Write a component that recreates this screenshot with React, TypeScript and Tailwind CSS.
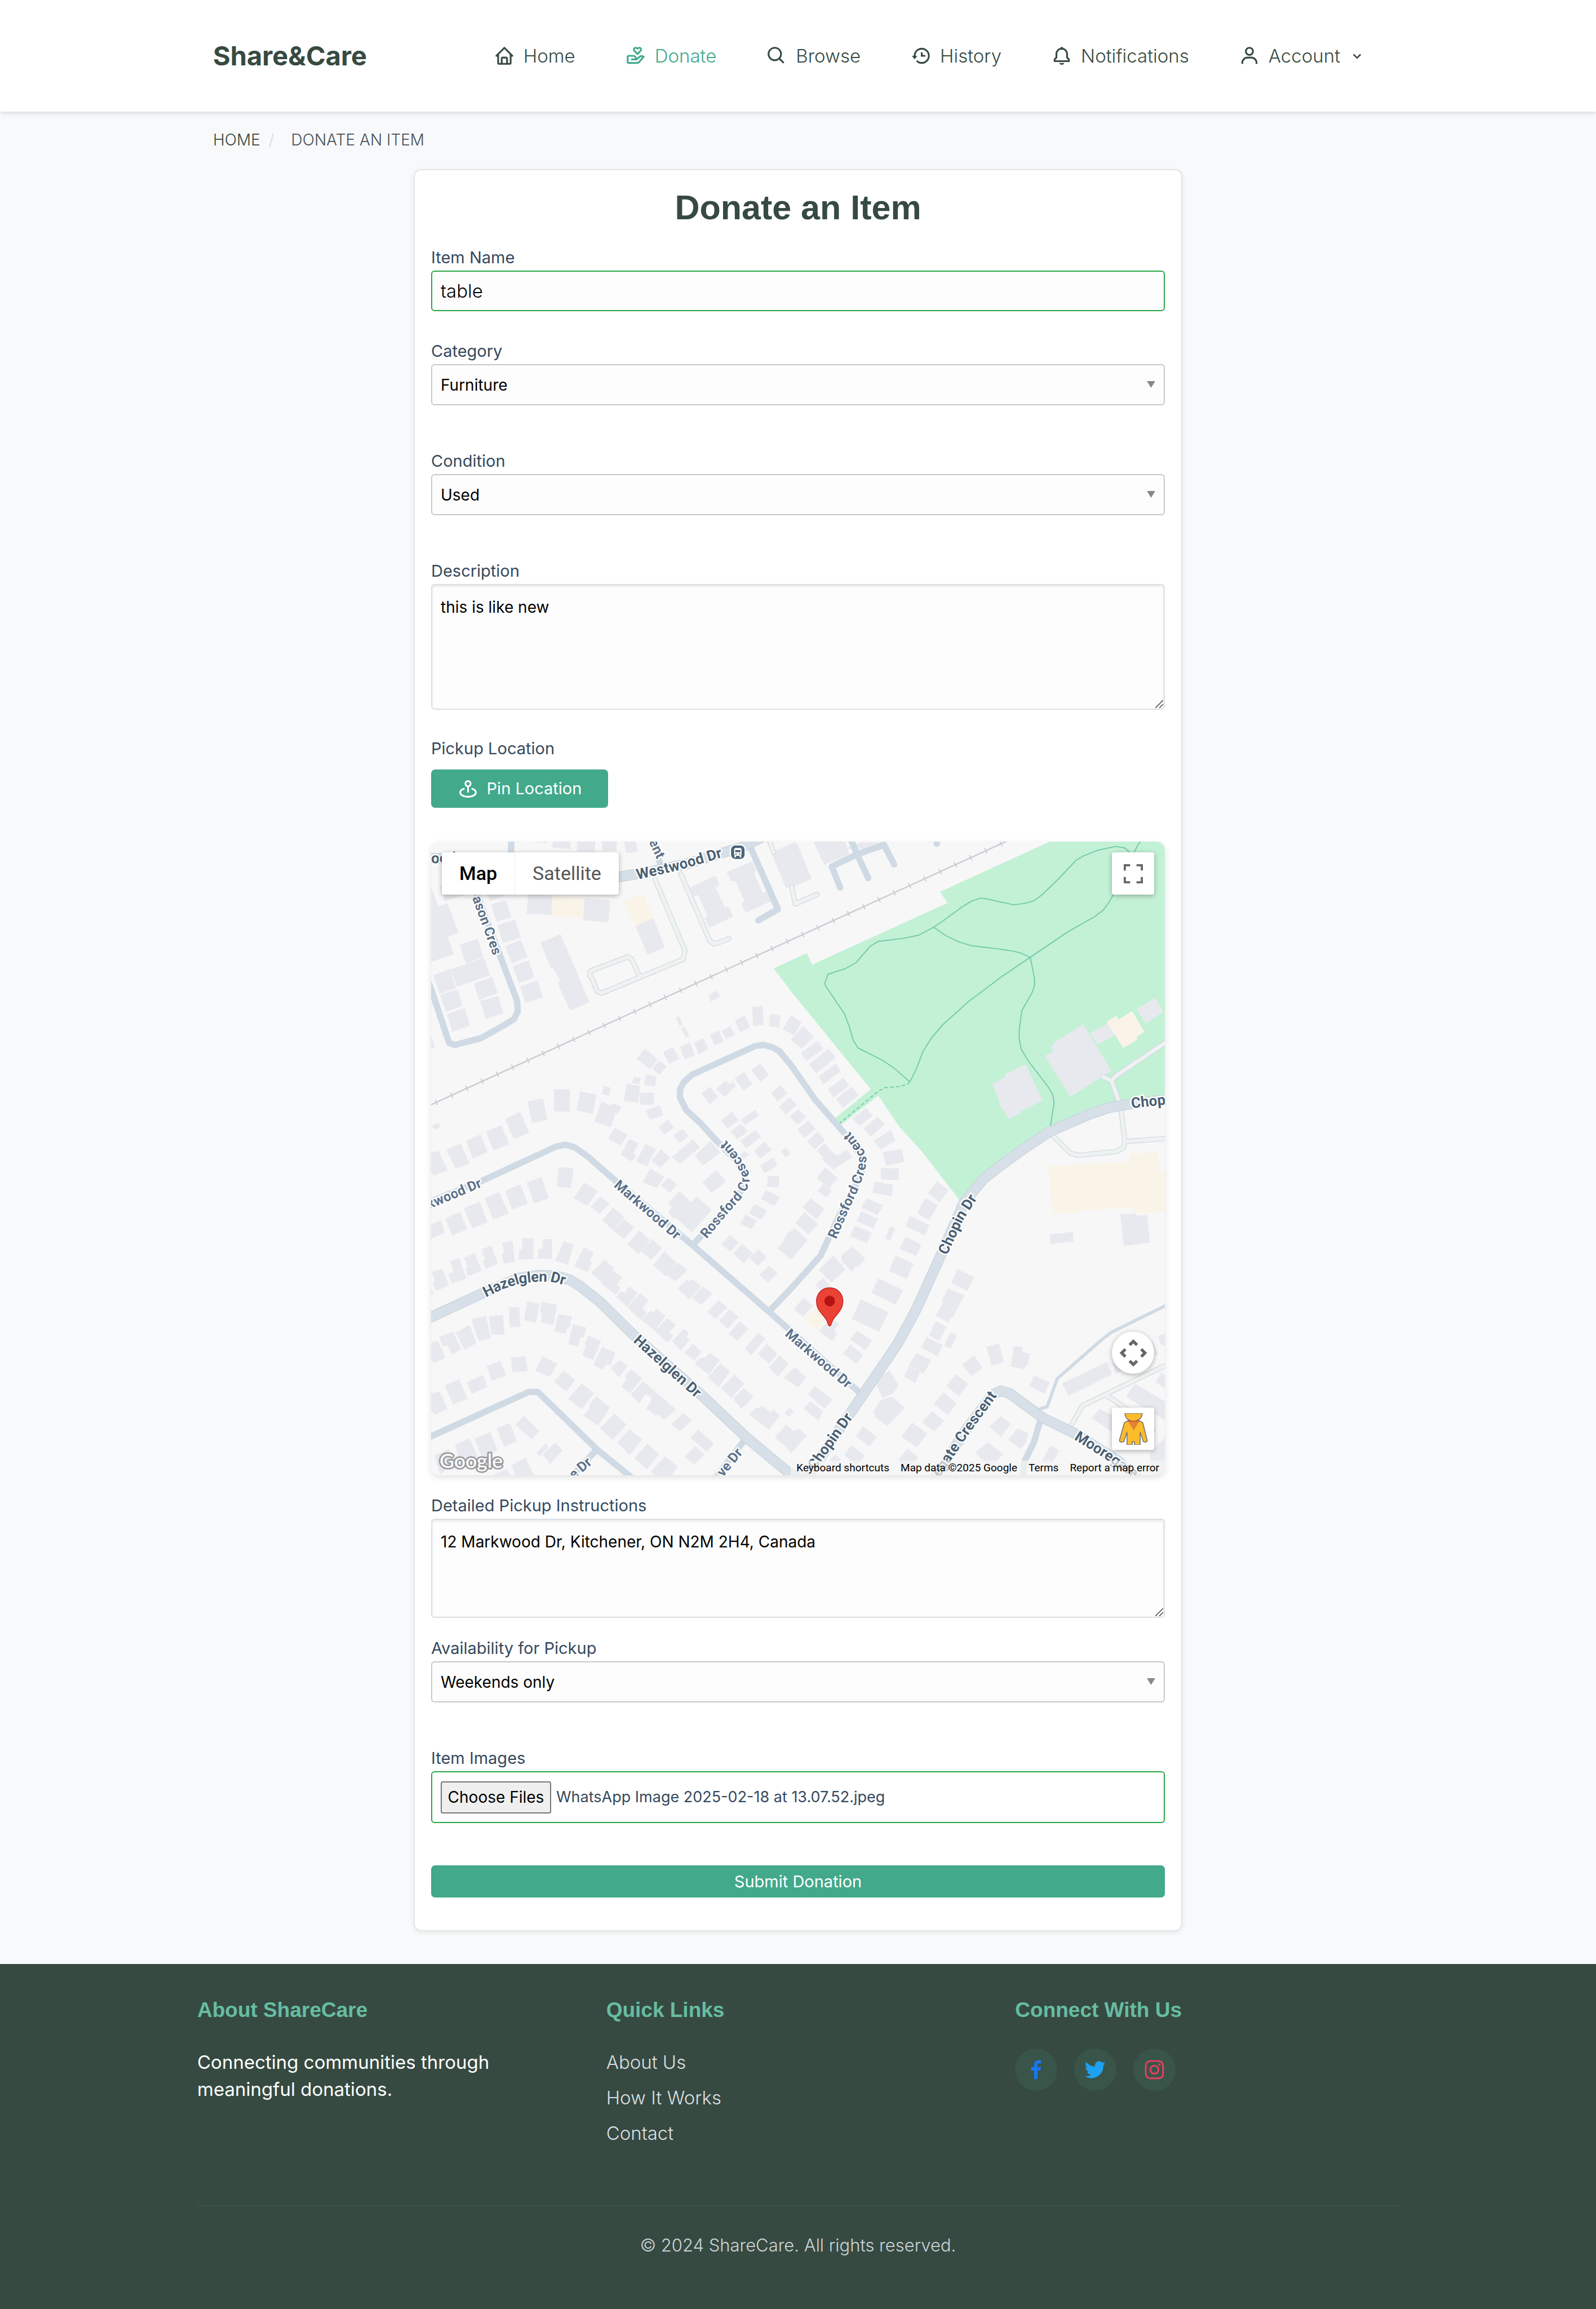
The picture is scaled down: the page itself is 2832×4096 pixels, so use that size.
import type { ComponentType, ReactNode } from 'react';
import {
  BiBell,
  BiChevronDown,
  BiDonateHeart,
  BiHistory,
  BiHome,
  BiLogoFacebook,
  BiLogoInstagram,
  BiLogoTwitter,
  BiMapPin,
  BiSearch,
  BiUser,
} from 'react-icons/bi';

type IconType = ComponentType<{ className?: string }>;

/* ---------- map geometry ---------- */

type TileName = 'nw' | 'ne' | 'sw' | 'se';

const tiles: Record<TileName, { x: number; y: number; sx: number; sy: number }> = {
  nw: { x: -17, y: -14, sx: 0.4591, sy: 0.3954 },
  ne: { x: 683, y: -14, sx: 0.4591, sy: 0.3954 },
  sw: { x: -17, y: 586, sx: 0.4591, sy: 0.4082 },
  se: { x: 683, y: 586, sx: 0.4591, sy: 0.4082 },
};

type Segment = [TileName, number[]];

function project([name, c]: Segment): string[] {
  const t = tiles[name];
  const out: string[] = [];
  for (let i = 0; i < c.length; i += 2) {
    out.push(`${Math.round(t.x + c[i] * t.sx)} ${Math.round(t.y + c[i + 1] * t.sy)}`);
  }
  return out;
}

function trace(...segments: Segment[]) {
  return 'M' + segments.flatMap(project).join('L');
}

function lots(name: TileName, shapes: number[][]) {
  return shapes
    .map((s) => {
      const full = s.length === 6 ? [...s, s[0] + s[4] - s[2], s[1] + s[5] - s[3]] : s;
      return trace([name, full]) + 'Z';
    })
    .join('');
}

const buildingsNW = lots('nw', [
  [37, 250, 65, 345, 105, 332, 150, 470, 105, 492, 130, 575, 37, 612],
  [75, 250, 92, 322, 175, 290],
  [155, 532, 228, 500, 253, 588],
  [118, 648, 255, 592, 280, 676],
  [46, 675, 115, 646, 140, 735],
  [75, 770, 145, 743, 168, 822],
  [102, 862, 175, 832, 198, 915],
  [213, 715, 290, 683, 312, 762],
  [240, 800, 314, 773, 336, 858],
  [268, 290, 280, 318, 342, 294],
  [285, 336, 347, 315, 369, 398],
  [309, 436, 383, 409, 407, 495],
  [343, 535, 408, 506, 435, 588],
  [374, 632, 440, 605, 465, 686],
  [402, 728, 474, 700, 498, 782],
  [437, 285, 538, 293, 533, 387],
  [670, 307, 775, 317, 769, 423],
  [880, 440, 953, 403, 1002, 540, 930, 577],
  [487, 520, 571, 477, 691, 803, 609, 845, 557, 710, 570, 702, 540, 640, 532, 643],
  [1105, 255, 1212, 198, 1228, 243, 1210, 255, 1250, 352, 1265, 347, 1284, 395, 1185, 447, 1165, 400, 1178, 393, 1138, 292, 1120, 298],
  [1257, 183, 1362, 128, 1380, 175, 1367, 182, 1405, 280, 1420, 272, 1440, 320, 1335, 377, 1315, 328, 1330, 322, 1292, 222, 1275, 226],
  [1440, 85, 1540, 38, 1568, 110, 1568, 235, 1500, 258],
  [455, 35, 512, 42, 512, 35],
  [540, 35, 613, 35, 611, 72, 536, 62],
  [640, 35, 715, 35, 712, 85, 638, 82],
  [743, 35, 803, 35, 802, 78, 742, 78],
  [831, 35, 882, 35, 889, 83, 842, 92],
  [1180, 772, 1217, 749, 1228, 778],
  [1045, 880, 1059, 870, 1077, 910],
  [1068, 930, 1082, 921, 1103, 965],
  [885, 1075, 920, 1028, 972, 1080, 940, 1125],
  [950, 1122, 977, 1083, 1008, 1113],
  [993, 1045, 1035, 1020, 1061, 1075],
  [1062, 1020, 1104, 997, 1126, 1056],
  [1121, 1000, 1160, 975, 1180, 1030],
  [1187, 958, 1225, 938, 1244, 992],
  [1236, 940, 1272, 920, 1290, 962],
  [1289, 892, 1330, 868, 1353, 925],
  [1361, 828, 1404, 823, 1409, 914],
  [1436, 862, 1478, 868, 1472, 925],
  [1488, 932, 1523, 868, 1566, 900, 1535, 963],
  [864, 1190, 874, 1160, 903, 1168],
  [923, 1150, 968, 1160, 960, 1209],
  [843, 1194, 900, 1206, 890, 1288],
  [897, 1238, 956, 1236, 957, 1294],
  [924, 1322, 980, 1298, 995, 1345],
  [975, 1400, 1015, 1366, 1040, 1405],
  [1036, 1444, 1073, 1410, 1101, 1445],
  [750, 1205, 777, 1213, 770, 1252],
  [544, 1221, 610, 1221, 610, 1328],
  [652, 1232, 719, 1248, 703, 1338],
  [740, 1283, 775, 1297, 790, 1290, 821, 1305, 808, 1340, 798, 1335, 778, 1404, 711, 1375],
  [435, 1280, 499, 1264, 517, 1368],
  [341, 1362, 405, 1330, 442, 1430],
  [263, 1424, 327, 1394, 359, 1484],
  [180, 1470, 240, 1440, 270, 1522],
  [98, 1510, 160, 1481, 196, 1578, 140, 1602],
  [37, 1525, 68, 1515, 105, 1608, 50, 1636, 37, 1620],
  [42, 1397, 68, 1382, 76, 1402],
  [37, 965, 54, 1020, 37, 1028],
  [768, 1458, 796, 1406, 848, 1440],
  [853, 1460, 892, 1480, 872, 1530, 884, 1536, 868, 1568, 820, 1535],
  [883, 1568, 922, 1484, 965, 1508, 928, 1590],
  [985, 1510, 1023, 1548, 985, 1598, 945, 1562],
  [1030, 1545, 1118, 1462, 1145, 1500, 1062, 1580],
  [1125, 1540, 1190, 1470, 1230, 1525, 1158, 1586],
  [1152, 1243, 1187, 1209, 1223, 1258],
  [1214, 1222, 1250, 1180, 1270, 1198, 1280, 1185, 1297, 1205, 1248, 1260],
  [1290, 1172, 1328, 1139, 1364, 1197],
  [1358, 1130, 1394, 1098, 1432, 1153],
  [1439, 1240, 1480, 1202, 1507, 1242],
  [1472, 1305, 1518, 1260, 1547, 1298],
  [1517, 1350, 1553, 1314, 1580, 1352],
  [1232, 1370, 1278, 1329, 1304, 1370],
  [1315, 1365, 1374, 1319, 1389, 1347],
  [1271, 1422, 1316, 1385, 1345, 1425],
  [1312, 1470, 1374, 1416, 1399, 1450],
  [1367, 1515, 1414, 1473, 1442, 1512],
  [1480, 1520, 1500, 1503, 1520, 1530],
]);

const buildingsNE = lots('ne', [
  [0, 45, 20, 38, 82, 213, 10, 250, -60, 90],
  [90, 35, 220, 35, 237, 95, 135, 147],
  [285, 38, 365, 38, 300, 72],
  [827, 1195, 883, 1160, 880, 1150, 966, 1103, 1034, 1275, 942, 1330, 943, 1337, 895, 1363, 875, 1320, 870, 1322, 855, 1288, 858, 1280],
  [1046, 1062, 1080, 1038, 1070, 1015, 1083, 1010, 1082, 998, 1203, 910, 1321, 1133, 1150, 1256],
  [1233, 953, 1305, 905, 1335, 960, 1262, 1010],
  [1423, 838, 1500, 784, 1534, 850, 1461, 907],
  [-5, 985, 47, 918, 91, 972, 42, 1030],
  [37, 1048, 108, 988, 131, 1027],
  [72, 1103, 153, 1028, 182, 1070],
  [110, 1162, 182, 1098, 203, 1136],
  [148, 1222, 213, 1166, 237, 1205],
  [183, 1268, 248, 1210, 277, 1252],
  [251, 1360, 307, 1309, 334, 1348],
  [297, 1412, 354, 1354, 383, 1392],
  [338, 1466, 409, 1420, 430, 1468, 366, 1510],
  [377, 1523, 455, 1507, 465, 1570, 388, 1588],
  [0, 1345, 25, 1320, 58, 1350, 28, 1388],
  [23, 1415, 70, 1371, 99, 1410],
  [64, 1470, 108, 1424, 138, 1465],
  [102, 1515, 134, 1480, 160, 1512],
  [125, 1555, 160, 1515, 190, 1540, 225, 1510, 250, 1545, 172, 1606],
]);

const buildingsSW = lots('sw', [
  [555, 165, 565, 73, 625, 80],
  [625, 218, 668, 147, 725, 185],
  [695, 258, 737, 211, 773, 244],
  [743, 322, 789, 262, 835, 307],
  [788, 370, 832, 315, 875, 352],
  [847, 432, 897, 367, 942, 413],
  [903, 465, 949, 410, 992, 450],
  [953, 530, 998, 466, 1050, 517],
  [1007, 570, 1057, 516, 1095, 550],
  [1055, 640, 1092, 598, 1103, 604, 1118, 595, 1150, 627, 1105, 688],
  [1112, 680, 1158, 626, 1197, 662],
  [1176, 746, 1225, 691, 1258, 724],
  [1225, 790, 1268, 735, 1304, 770],
  [1266, 848, 1312, 790, 1347, 825],
  [1330, 918, 1385, 843, 1415, 870],
  [1386, 940, 1422, 893, 1466, 940],
  [1432, 1005, 1475, 947, 1512, 988],
  [1500, 1050, 1540, 1002, 1584, 1050, 1552, 1095],
  [910, 145, 940, 80, 1000, 120, 970, 172],
  [985, 160, 1015, 122, 1052, 155],
  [1015, 240, 1062, 186, 1108, 237, 1135, 212, 1195, 275, 1112, 377, 1048, 312, 1035, 310, 1015, 285, 1030, 260],
  [1156, 142, 1215, 88, 1253, 143],
  [1298, 30, 1330, 0, 1350, 18, 1315, 50],
  [1396, 65, 1450, 30, 1467, 68],
  [1426, 115, 1474, 118, 1470, 170, 1422, 165],
  [1419, 181, 1476, 213, 1455, 255],
  [1370, 245, 1422, 275, 1400, 318],
  [1333, 295, 1380, 320, 1360, 363],
  [1234, 430, 1270, 386, 1307, 423],
  [1282, 475, 1320, 430, 1365, 475],
  [1350, 495, 1388, 456, 1422, 495],
  [1391, 576, 1430, 532, 1467, 567],
  [1467, 450, 1492, 423, 1508, 430, 1500, 405, 1535, 358, 1590, 415, 1522, 504],
  [431, 148, 492, 120, 523, 217],
  [343, 183, 406, 154, 436, 242],
  [256, 218, 319, 190, 357, 290],
  [173, 264, 237, 236, 271, 330],
  [95, 313, 157, 282, 186, 362],
  [37, 340, 77, 321, 94, 378, 37, 406],
  [40, 562, 82, 543, 110, 622, 58, 650, 42, 612, 55, 603],
  [37, 640, 47, 665, 37, 670],
  [115, 512, 152, 498, 184, 590, 125, 616, 106, 570, 130, 560],
  [172, 495, 217, 475, 247, 555, 190, 581, 179, 545, 190, 542],
  [246, 455, 286, 438, 314, 521, 263, 547, 249, 512, 259, 505],
  [331, 424, 372, 416, 384, 514, 335, 522, 328, 475, 338, 472],
  [412, 403, 460, 403, 460, 501, 399, 501, 400, 456, 413, 456],
  [497, 408, 536, 409, 535, 499, 478, 499, 479, 453, 496, 453],
  [583, 420, 625, 434, 602, 526, 549, 510],
  [668, 445, 708, 470, 693, 510, 701, 516, 681, 562, 628, 535],
  [698, 566, 753, 502, 790, 545, 740, 608],
  [738, 613, 783, 552, 825, 585, 802, 622, 820, 635, 800, 668],
  [802, 675, 822, 650, 837, 660, 853, 626, 890, 660, 845, 723],
  [847, 725, 900, 660, 934, 693, 908, 730, 927, 750, 902, 784],
  [905, 785, 940, 742, 957, 747, 968, 730, 1005, 765, 960, 832],
  [960, 835, 1010, 773, 1047, 805, 1020, 840, 1037, 855, 1013, 889],
  [1031, 882, 1080, 825, 1100, 842, 1092, 862, 1104, 872, 1067, 925],
  [1082, 937, 1117, 893, 1153, 930, 1125, 973],
  [1124, 985, 1143, 962, 1167, 958, 1190, 936, 1228, 970, 1182, 1038],
  [1178, 1050, 1230, 985, 1270, 1024, 1225, 1095],
  [1233, 1100, 1290, 1036, 1328, 1080, 1277, 1147],
  [1283, 1150, 1327, 1099, 1367, 1138, 1318, 1195],
  [1348, 1222, 1378, 1187, 1390, 1192, 1402, 1182, 1440, 1212, 1450, 1198, 1477, 1228, 1430, 1293],
  [1495, 1215, 1518, 1191, 1535, 1208],
  [1455, 1327, 1502, 1269, 1535, 1303],
  [1490, 1357, 1545, 1290, 1580, 1328, 1522, 1404],
  [37, 890, 65, 880, 96, 958, 47, 984, 37, 965],
  [69, 862, 128, 837, 162, 918, 125, 943, 103, 898, 85, 908],
  [137, 842, 195, 806, 225, 892, 175, 920],
  [202, 780, 263, 764, 283, 866, 232, 881],
  [276, 767, 333, 760, 340, 852, 285, 853],
  [358, 725, 401, 723, 405, 817],
  [433, 697, 483, 708, 470, 795],
  [490, 701, 557, 713, 542, 806, 490, 795, 495, 752, 485, 748],
  [563, 756, 618, 767, 610, 818, 598, 815, 592, 848, 545, 838],
  [620, 804, 677, 818, 668, 865, 654, 862, 645, 907, 603, 897],
  [684, 856, 739, 882, 706, 969, 661, 948, 675, 905, 668, 900],
  [742, 908, 798, 937, 777, 995, 757, 990, 746, 1015, 705, 992],
  [778, 1008, 815, 968, 848, 998, 812, 1050],
  [823, 1092, 843, 1058, 836, 1043, 863, 1012, 908, 1055, 855, 1125],
  [861, 1130, 910, 1068, 960, 1112, 943, 1138, 922, 1128, 895, 1170],
  [923, 1192, 945, 1158, 943, 1140, 960, 1116, 1012, 1160, 965, 1230],
  [965, 1215, 1010, 1167, 1048, 1198],
  [1028, 1266, 1078, 1216, 1113, 1250],
  [1107, 1330, 1140, 1290, 1204, 1358, 1175, 1396],
  [1083, 1417, 1128, 1370, 1166, 1409],
  [265, 998, 323, 973, 346, 1040],
  [366, 958, 428, 953, 435, 1021],
  [184, 1072, 250, 1038, 271, 1092],
  [93, 1087, 152, 1058, 187, 1148],
  [37, 1125, 72, 1115, 104, 1195, 50, 1224, 37, 1200],
  [467, 1020, 496, 951, 557, 987, 528, 1048],
  [544, 1070, 583, 1019, 632, 1060, 594, 1118],
  [604, 1150, 657, 1077, 710, 1125, 658, 1198],
  [664, 1228, 692, 1190, 688, 1178, 718, 1136, 776, 1190, 725, 1274],
  [735, 1286, 793, 1218, 843, 1268, 787, 1340],
  [804, 1352, 857, 1292, 909, 1338, 855, 1412],
  [875, 1425, 930, 1357, 979, 1407, 928, 1477],
  [943, 1488, 1003, 1417, 1055, 1465, 1028, 1504, 960, 1504],
  [384, 1268, 421, 1227, 483, 1298, 450, 1338],
  [307, 1287, 361, 1262, 392, 1345, 338, 1372],
  [216, 1335, 280, 1304, 311, 1390, 250, 1430],
  [134, 1362, 195, 1332, 230, 1420, 160, 1450],
  [50, 1410, 110, 1382, 130, 1450, 75, 1500],
  [368, 1458, 428, 1422, 460, 1504, 385, 1504],
  [470, 1402, 507, 1356, 522, 1370],
  [497, 1408, 548, 1353, 580, 1390, 529, 1450],
  [290, 1504, 350, 1475, 362, 1504],
]);

const buildingsSE = lots('se', [
  [103, 125, 137, 75, 190, 125],
  [107, 183, 130, 152, 165, 185],
  [46, 263, 78, 217, 134, 270],
  [15, 332, 55, 284, 109, 338],
  [-20, 385, 12, 358, 66, 412, 0, 500, -50, 450],
  [369, 79, 443, 80, 443, 134],
  [342, 141, 420, 156, 412, 208],
  [309, 219, 377, 252, 355, 297],
  [287, 280, 355, 314, 337, 360],
  [262, 345, 330, 379, 310, 429],
  [405, 350, 426, 357, 408, 414],
  [562, 195, 600, 139, 647, 182],
  [553, 217, 604, 253, 567, 322],
  [487, 301, 569, 343, 550, 391],
  [469, 398, 536, 433, 514, 487],
  [430, 485, 504, 523, 475, 594],
  [358, 591, 460, 645, 430, 714],
  [286, 689, 399, 748, 362, 837],
  [205, 495, 210, 478, 250, 443, 305, 500, 272, 540, 262, 535, 250, 560, 210, 515],
  [110, 550, 171, 486, 222, 548, 163, 609],
  [98, 620, 130, 588, 170, 640, 120, 650],
  [9, 733, 50, 682, 88, 718],
  [110, 835, 160, 780, 195, 800, 175, 830, 187, 852, 167, 883],
  [684, 548, 753, 586, 726, 648, 658, 612],
  [644, 637, 713, 670, 665, 775, 658, 770, 648, 797, 595, 765, 625, 700, 620, 690],
  [595, 789, 639, 816, 610, 882],
  [558, 862, 623, 902, 603, 954, 534, 912],
  [655, 840, 681, 853, 655, 916],
  [515, 937, 575, 970, 545, 1034, 484, 992],
  [485, 998, 530, 1025, 510, 1077, 463, 1046],
  [339, 1057, 405, 1018, 440, 1085, 418, 1125, 375, 1147],
  [337, 1208, 368, 1155, 415, 1138, 467, 1190, 395, 1277, 347, 1235],
  [803, 908, 857, 892, 875, 980, 825, 995],
  [917, 905, 953, 912, 950, 930, 982, 940, 975, 988, 953, 1012, 903, 1000],
  [703, 990, 754, 947, 787, 1008, 741, 1043],
  [638, 1090, 677, 1035, 728, 1080, 690, 1137],
  [587, 1172, 627, 1120, 680, 1170, 645, 1225],
  [538, 1256, 580, 1206, 629, 1252],
  [454, 1325, 497, 1260, 560, 1310],
  [440, 1430, 480, 1380, 523, 1420, 480, 1475],
  [271, 832, 332, 880, 306, 926, 242, 875],
  [242, 897, 294, 945, 268, 985, 212, 940],
  [-32, 1050, 12, 1003, 60, 1050, 25, 1095],
  [96, 1090, 167, 1155, 135, 1195, 67, 1130],
  [78, 1160, 131, 1207, 108, 1250, 48, 1195],
  [-30, 1360, 30, 1285, 63, 1320, 0, 1395],
  [265, 1323, 295, 1276, 351, 1325],
  [217, 1410, 245, 1365, 303, 1410, 270, 1460],
  [155, 1435, 180, 1408, 203, 1430],
  [1002, 1040, 1065, 1073, 1044, 1126, 980, 1090],
  [1115, 1078, 1302, 978, 1323, 1037, 1143, 1137],
  [1320, 980, 1365, 1000, 1365, 1020, 1338, 1032],
  [1378, 1140, 1415, 1080, 1540, 1160, 1540, 1250],
  [1238, 1240, 1270, 1195, 1330, 1230, 1320, 1300],
  [1510, 857, 1540, 845, 1540, 902, 1525, 900],
  [1500, 1070, 1525, 1027, 1540, 1040, 1540, 1103],
  [1477, 890, 1490, 885, 1510, 940, 1495, 952],
  [817, 1280, 862, 1229, 905, 1265, 862, 1328],
  [893, 1340, 932, 1286, 975, 1308, 970, 1345, 948, 1385],
  [758, 1400, 808, 1350, 873, 1405, 820, 1470],
  [1032, 1440, 1067, 1366, 1105, 1390, 1070, 1460],
  [1480, 1400, 1540, 1330, 1540, 1504],
  [1065, 388, 1160, 375, 1163, 420, 1069, 432],
  [1355, 293, 1420, 290, 1422, 302, 1465, 296, 1478, 425, 1370, 440],
]);

const commercial =
  lots('nw', [
    [540, 293, 670, 305, 663, 402],
    [833, 320, 910, 284, 953, 403, 880, 440],
  ]) +
  lots('ne', [[1300, 898, 1340, 870, 1349, 887, 1405, 848, 1455, 945, 1425, 972, 1427, 985, 1368, 1024]]) +
  lots('se', [
    [52, 785, 100, 728, 150, 765, 102, 832],
    [1058, 72, 1394, 50, 1394, 12, 1513, 6, 1518, 100, 1540, 98, 1540, 280, 1412, 288, 1410, 262, 1185, 276, 1183, 292, 1130, 292, 1130, 286, 1075, 288],
  ]);

const park =
  trace(
    ['ne', [1065, 35, 613, 275, 642, 328, 86, 625, 63, 570]],
    ['nw', [1450, 643]],
    ['ne', [0, 755, 326, 1222, 180, 1358, 205, 1390, 358, 1252, 445, 1400]],
    ['se', [535, 0, 695, 230, 790, 130, 885, 50]],
    ['ne', [1065, 1425, 1230, 1340, 1310, 1310, 1380, 1295, 1545, 1270, 1545, 35]],
  ) + 'Z';

const parkPaths =
  trace(['ne', [1440, 35, 1430, 45, 1413, 86, 1370, 200, 1327, 290, 1310, 325, 1285, 365, 1250, 395, 1140, 468, 985, 590, 870, 680, 730, 802, 623, 912, 575, 980, 542, 1040, 515, 1125, 487, 1187]]) +
  trace(['ne', [1410, 120, 1392, 84, 1375, 65, 1340, 58, 1265, 77, 1205, 103, 1175, 125, 1100, 215, 1035, 288, 1000, 318, 970, 330, 920, 338, 880, 330, 800, 308, 780, 305, 740, 322, 700, 352, 625, 415, 585, 445, 525, 483, 465, 498, 358, 514, 325, 537, 265, 614, 220, 645, 150, 670, 137, 710, 140, 725, 218, 860, 238, 920, 255, 990, 275, 1025, 375, 1083, 420, 1117, 487, 1187]]) +
  trace(['ne', [585, 445, 635, 485, 690, 515, 740, 533, 850, 550, 910, 558, 945, 570, 985, 590, 1003, 690, 1002, 725, 990, 760, 950, 845, 938, 940, 938, 980, 947, 1030, 975, 1085, 1060, 1215, 1078, 1250, 1083, 1290, 1068, 1400]]);

const parkTrail = trace(['ne', [487, 1187, 475, 1200, 440, 1208, 385, 1215, 360, 1230, 195, 1385]]);

const minorRoads =
  trace(['nw', [220, 270, 315, 565, 393, 800, 395, 850, 380, 885, 345, 910, 243, 975, 135, 1010, 112, 1000, 37, 740, 20, 690]]) +
  trace(['nw', [368, 25, 366, 100]]) +
  trace(['nw', [985, 150, 945, 20]]) +
  trace(['nw', [1350, 50, 1468, 360, 1388, 412]]) +
  trace(['ne', [245, 25, 270, 95, 315, 210]]) +
  trace(['ne', [200, 255, 165, 155, 270, 95, 382, 50, 422, 145]]) +
  trace(['ne', [600, 25, 600, 45]]) +
  trace(
    ['sw', [1430, 745]],
    ['se', [0, 635, 120, 485, 155, 400, 200, 290, 260, 170, 290, 100, 295, 20]],
    ['ne', [280, 1530, 215, 1430, 95, 1270, 0, 1110]],
    ['nw', [1475, 1040, 1445, 1018, 1410, 1008, 1375, 1015, 1230, 1090, 1115, 1150, 1080, 1185, 1065, 1220, 1063, 1260, 1090, 1320, 1150, 1385, 1215, 1470]],
    ['sw', [1300, 50, 1330, 120, 1320, 180, 1230, 300, 1155, 390, 1115, 435]],
  ) +
  trace(
    ['sw', [10, 245, 245, 140]],
    ['nw', [555, 1495, 590, 1487, 630, 1500, 680, 1540]],
    ['sw', [800, 140, 1115, 435, 1430, 745]],
    ['se', [275, 1115]],
  ) +
  trace(['sw', [20, 1333, 440, 1118, 478, 1118, 720, 1385, 870, 1520]]) +
  trace(['sw', [720, 1385, 600, 1530]]) +
  trace(['sw', [1330, 1340, 1215, 1510]]) +
  trace(['se', [1025, 1250, 1000, 1350, 960, 1440, 955, 1510]]);

const majorRoads =
  trace(['nw', [-10, 115, 200, 120, 500, 200, 812, 205, 960, 175, 1100, 140, 1320, 60, 1400, 15]]) +
  trace(['sw', [10, 785, 250, 660, 400, 588, 480, 575, 550, 577, 610, 598, 650, 625, 730, 695, 870, 850, 1150, 1130, 1340, 1330, 1510, 1490, 1568, 1530]]) +
  trace(
    ['se', [60, 1520, 240, 1220, 440, 890, 515, 735, 620, 470, 710, 240, 790, 130, 885, 50]],
    ['ne', [940, 1520, 1065, 1425, 1230, 1340, 1310, 1310, 1380, 1295, 1560, 1270]],
  ) +
  trace(['se', [590, 1520, 720, 1290, 830, 1130, 865, 1112, 900, 1125, 1040, 1240, 1170, 1310, 1350, 1440, 1440, 1530]]);

const driveways =
  trace(['nw', [960, 215, 1085, 560, 1075, 600, 740, 762, 720, 750, 705, 700, 690, 675, 695, 655, 850, 588, 865, 600, 897, 680]]) +
  trace(['nw', [1067, 190, 1188, 510, 1205, 525, 1265, 500]]) +
  trace(['nw', [1430, 25, 1450, 85]]) +
  trace(['ne', [0, 250, 15, 335, 105, 288]]) +
  trace(['se', [1550, 990, 1200, 1180, 1150, 1280]]) +
  trace(['se', [1300, 1135, 1380, 1195, 1490, 1290]]) +
  trace(['ne', [1550, 992, 1340, 1155, 1320, 1180, 1350, 1280]]) +
  trace(['ne', [1320, 1180, 1285, 1160]]) +
  trace(['ne', [1360, 1318, 1375, 1470, 1370, 1500, 1340, 1520, 1180, 1538, 1150, 1528, 1078, 1445]]) +
  trace(['ne', [1375, 1472, 1550, 1457]]);

const creek = trace(['se', [1550, 714, 1320, 840, 1285, 870, 1095, 1055, 1055, 1185, 1015, 1200]]);

interface StreetLabel {
  id: string;
  text: string;
  d: string;
  major?: boolean;
  end?: boolean;
}

const streetLabels: StreetLabel[] = [
  { id: 'wood', text: 'ood', d: trace(['nw', [38, 116, 200, 112]]), major: true },
  { id: 'westwood', text: 'Westwood Dr', d: trace(['nw', [885, 195, 1050, 152, 1270, 75]]), major: true },
  { id: 'mason', text: 'ason Cres', d: trace(['nw', [200, 220, 312, 575]]), end: true },
  { id: 'crescent-north', text: 'ent', d: trace(['nw', [930, -30, 987, 112]]), end: true },
  {
    id: 'rossford-west',
    text: 'Rossford Crescent',
    d: trace(['sw', [1158, 395, 1240, 285, 1310, 195, 1330, 150, 1330, 110, 1300, 50, 1262, -10]], ['nw', [1190, 1420]]),
  },
  {
    id: 'rossford-east',
    text: 'Rossford Crescent',
    d: trace(['se', [165, 402, 215, 270, 262, 160, 285, 80, 290, 20]], ['ne', [270, 1510, 240, 1460, 190, 1390]]),
  },
  { id: 'markwood-mid', text: 'Markwood Dr', d: trace(['sw', [802, 148, 1095, 430]]) },
  { id: 'markwood-south', text: 'Markwood Dr', d: trace(['sw', [1507, 838]], ['se', [275, 1120]]) },
  { id: 'markwood-west', text: 'kwood Dr', d: trace(['sw', [-30, 275, 242, 145]]), end: true },
  { id: 'hazelglen-north', text: 'Hazelglen Dr', d: trace(['sw', [255, 658, 330, 618, 400, 592, 480, 582, 540, 585, 640, 615]]), major: true },
  { id: 'hazelglen-south', text: 'Hazelglen Dr', d: trace(['sw', [882, 868, 1180, 1168]]), major: true },
  { id: 'chopin-north', text: 'Chopin Dr', d: trace(['se', [622, 475, 690, 310, 770, 170]]), major: true },
  { id: 'chopin-south', text: 'Chopin Dr', d: trace(['se', [50, 1520, 238, 1222]]), major: true, end: true },
  { id: 'chopin-east', text: 'Chopin Dr', d: trace(['ne', [1400, 1290, 1800, 1240]]), major: true },
  { id: 'mooregate-crescent', text: 'egate Crescent', d: trace(['se', [540, 1590, 720, 1290, 832, 1122]]), major: true, end: true },
  { id: 'mooregate', text: 'Mooregate', d: trace(['se', [1175, 1318, 1300, 1405, 1500, 1560]]), major: true },
  { id: 'drive-south-west', text: 'e Dr', d: trace(['sw', [560, 1560, 690, 1432]]), end: true },
  { id: 'drive-south', text: 've Dr', d: trace(['sw', [1190, 1550, 1308, 1386]]), end: true },
];

function StreetMap() {
  return (
    <svg viewBox="0 0 1390 1200" preserveAspectRatio="xMidYMid slice" className="block h-full w-full" aria-hidden="true">
      <rect width="1390" height="1200" fill="#f7f7f7" />
      <path d={park} fill="#c3f1d5" />
      <path d={buildingsNW + buildingsNE + buildingsSW + buildingsSE} fill="#e8e9ef" />
      <path d={commercial} fill="#faf4e8" />
      <path d={parkPaths} fill="none" stroke="#74c9ac" strokeWidth="2" />
      <path d={parkTrail} fill="none" stroke="#74c9ac" strokeWidth="2" strokeDasharray="7 4" />
      <path d="M-4 500L1093 -2" stroke="#c8ccd3" strokeWidth="2.5" />
      <path d="M9 494L1093 -2" stroke="#c8ccd3" strokeWidth="11" strokeDasharray="2 29.8" />
      <g fill="none" strokeLinejoin="round" strokeLinecap="round">
        <path d={driveways} stroke="#d6dbdf" strokeWidth="10" />
        <path d={driveways} stroke="#eef2f3" strokeWidth="7" />
        <path d={creek} stroke="#cfdae4" strokeWidth="6" />
        <path d={minorRoads} stroke="#cfdae4" strokeWidth="12" />
        <path d={majorRoads} stroke="#c3ced8" strokeWidth="20" />
        <path d={majorRoads} stroke="#d7e0e8" strokeWidth="18" />
      </g>
      <defs>
        {streetLabels.map((l) => (
          <path key={l.id} id={l.id} d={l.d} />
        ))}
      </defs>
      {streetLabels.map((l) => (
        <text
          key={l.id}
          dy="9"
          fontFamily="Roboto, sans-serif"
          fontWeight="700"
          fontSize={l.major ? 28 : 26}
          fill={l.major ? '#4b5f72' : '#5c7189'}
          stroke="#ffffff"
          strokeWidth="5"
          strokeLinejoin="round"
          paintOrder="stroke"
          textAnchor={l.end ? 'end' : 'start'}
        >
          <textPath href={`#${l.id}`} startOffset={l.end ? '100%' : '0%'}>
            {l.text}
          </textPath>
        </text>
      ))}
      <g transform="translate(581 20)">
        <rect x="-14" y="-14" width="28" height="28" rx="9" fill="#4a6378" stroke="#fff" strokeWidth="2.5" />
        <rect x="-7" y="-8" width="14" height="15" rx="3" fill="#fff" />
        <rect x="-5" y="-4" width="10" height="4" fill="#4a6378" />
        <circle cx="-3.500" cy="3.500" r="1.300" fill="#4a6378" />
        <circle cx="3.500" cy="3.500" r="1.300" fill="#4a6378" />
        <path d="M-5 7v3M5 7v3" stroke="#fff" strokeWidth="3" />
      </g>
      <path
        d="M755 845C740.500 845 730 856 730 870C730 890 745 896 750 908L753 916Q755 918 757 916L760 908C765 896 780 890 780 870C780 856 769.500 845 755 845Z"
        fill="#ea4335"
        stroke="#c5221f"
        strokeWidth="1.500"
      />
      <circle cx="755" cy="870" r="10" fill="#b31412" />
      <text
        x="16"
        y="1186"
        fontFamily="Lato, sans-serif"
        fontSize="38"
        fontWeight="500"
        fill="#ffffff"
        stroke="#9c9c9f"
        strokeWidth="6"
        strokeLinejoin="round"
        paintOrder="stroke"
      >
        Google
      </text>
    </svg>
  );
}

function MapButton({ label, className, children }: { label: string; className: string; children: ReactNode }) {
  return (
    <button
      type="button"
      aria-label={label}
      className={`absolute right-[19px] flex size-[75px] items-center justify-center bg-white shadow-[0_2px_8px_rgba(0,0,0,0.3)] ${className}`}
    >
      {children}
    </button>
  );
}

function MapPanel() {
  return (
    <div className="relative mt-[60px] aspect-[1390/1200] w-full overflow-hidden rounded-[15px] font-[Roboto,sans-serif] shadow-[0_4px_12px_rgba(0,0,0,0.12)]">
      <StreetMap />
      <div className="absolute left-[19px] top-[19px] flex h-[75px] rounded-[4px] bg-white text-[34px] shadow-[0_2px_8px_rgba(0,0,0,0.3)]">
        <button type="button" className="w-[130px] border-r border-[#ebebeb] font-medium text-black">
          Map
        </button>
        <button type="button" className="w-[184px] text-[#565656]">
          Satellite
        </button>
      </div>
      <MapButton label="Toggle fullscreen view" className="top-[19px] rounded-[4px]">
        <svg viewBox="0 0 18 18" className="size-[34px]" fill="#666">
          <path d="M0 0v6h2V2h4V0zM16 0h-4v2h4v4h2V0zM16 16h-4v2h6v-6h-2zM2 12H0v6h6v-2H2z" />
        </svg>
      </MapButton>
      <MapButton label="Map camera controls" className="bottom-[180px] rounded-full">
        <svg viewBox="0 0 32 32" className="size-[60px]" fill="none" stroke="#666" strokeWidth="2.800">
          <path d="M12.500 8.500L16 5l3.500 3.500M12.500 23.500L16 27l3.500-3.500M8.500 12.500L5 16l3.500 3.500M23.500 12.500L27 16l-3.500 3.500" />
        </svg>
      </MapButton>
      <MapButton label="Street View Pegman" className="bottom-[45px] rounded-[4px]">
        <svg viewBox="0 0 56 60" className="h-[56px] w-[54px]">
          <g fill="#fbbc2c" stroke="#6f6f6f" strokeWidth="1.600">
            <path d="M18 14L11 18L2 50Q1 55 6 55L10 54L16 36V60H26V54H30V60H41V36L47 54L51 55Q56 54 54 50L46 18L39 14Z" />
            <path d="M12 0Q13 14 28 15Q44 14 45 0Z" />
          </g>
          <path d="M18 15H39L29 33Z" fill="#e08433" />
          <path d="M17 15H40" stroke="#e0562e" strokeWidth="2" />
        </svg>
      </MapButton>
      <div className="absolute bottom-0 right-0 flex h-[26px] items-center bg-[#f5f5f5]/70 text-[19px] leading-[26px] text-black">
        <button type="button" className="px-[10px]">
          Keyboard shortcuts
        </button>
        <span className="px-[10px]">Map data ©2025 Google</span>
        <a href="#terms" className="px-[10px]">
          Terms
        </a>
        <a href="#report" className="px-[10px]">
          Report a map error
        </a>
      </div>
    </div>
  );
}

/* ---------- page header ---------- */

const navItems: { label: string; Icon: IconType; active?: boolean; menu?: boolean }[] = [
  { label: 'Home', Icon: BiHome },
  { label: 'Donate', Icon: BiDonateHeart, active: true },
  { label: 'Browse', Icon: BiSearch },
  { label: 'History', Icon: BiHistory },
  { label: 'Notifications', Icon: BiBell },
  { label: 'Account', Icon: BiUser, menu: true },
];

function Header() {
  return (
    <header className="relative bg-white shadow-[0_2px_8px_rgba(0,0,0,0.15)]">
      <div className="mx-auto flex h-[198px] max-w-[2132px] items-center justify-between px-[28px]">
        <a href="#home" className="text-[47px] font-bold leading-[56px]">
          Share&amp;Care
        </a>
        <nav aria-label="Main" className="mr-[31px] flex gap-[88px]">
          {navItems.map(({ label, Icon, active, menu }) => (
            <a
              key={label}
              href={`#${label.toLowerCase()}`}
              className={`flex items-center gap-[15px] text-[33px] leading-[45px] ${active ? 'text-[#42a98b]' : ''}`}
            >
              <Icon className="size-[38px]" />
              <span className="font-light">{label}</span>
              {menu && <BiChevronDown className="size-[30px]" />}
            </a>
          ))}
        </nav>
      </div>
    </header>
  );
}

/* ---------- form ---------- */

const labelClass = 'mb-[5px] block text-[29px] leading-[36px] text-[#34495e]';

function SelectField({ id, label, value, className }: { id: string; label: string; value: string; className: string }) {
  return (
    <div className={className}>
      <label htmlFor={id} className={labelClass}>
        {label}
      </label>
      <div className="relative">
        <select
          id={id}
          defaultValue={value}
          className="block h-[73px] w-full appearance-none rounded-[6px] border-2 border-[#c8c8c8] bg-[#fdfdfd] px-[15px] text-[28px] text-black"
        >
          <option>{value}</option>
        </select>
        <svg viewBox="0 0 16 13" className="pointer-events-none absolute right-[17px] top-[30px] h-[12px] w-[15px]" fill="#888">
          <path d="M0 0H16L8 13Z" />
        </svg>
      </div>
    </div>
  );
}

function TextAreaField({ id, label, value, className, height }: { id: string; label: string; value: string; className: string; height: string }) {
  return (
    <div className={className}>
      <label htmlFor={id} className={labelClass}>
        {label}
      </label>
      <div className="relative">
        <textarea
          id={id}
          defaultValue={value}
          className={`block w-full resize-none rounded-[6px] border-2 border-[#dde0e6] bg-[#fdfdfd] px-[15px] py-[20px] text-[28px] leading-[38px] text-black shadow-[inset_0_2px_4px_rgba(0,0,0,0.1)] ${height}`}
        />
        <svg viewBox="0 0 14 14" className="pointer-events-none absolute bottom-[3px] right-[3px] size-[14px]" stroke="#444" strokeWidth="1.500">
          <path d="M0 14L14 0M7 14L14 7" />
        </svg>
      </div>
    </div>
  );
}

function DonateForm() {
  return (
    <form className="mx-auto w-full max-w-[1364px] rounded-[14px] border-2 border-[#e4e5e6] bg-white px-[29px] pb-[58px] pt-[30px] shadow-[0_2px_8px_rgba(0,0,0,0.08)]">
      <h1 className="text-center font-['Liberation_Sans',sans-serif] text-[61px] font-bold leading-[72px]">Donate an Item</h1>

      <div className="mt-[35px]">
        <label htmlFor="item-name" className={labelClass}>
          Item Name
        </label>
        <input
          id="item-name"
          type="text"
          defaultValue="table"
          className="block h-[72px] w-full rounded-[6px] border-2 border-[#28a745] bg-[#fdfdfd] px-[15px] text-[33px] font-light text-black"
        />
      </div>

      <SelectField id="category" label="Category" value="Furniture" className="mt-[53px]" />
      <SelectField id="condition" label="Condition" value="Used" className="mt-[81px]" />
      <TextAreaField id="description" label="Description" value="this is like new" className="mt-[81px]" height="h-[223px]" />

      <div className="mt-[51px]">
        <p className="text-[29px] leading-[36px] text-[#34495e]">Pickup Location</p>
        <button
          type="button"
          className="mt-[19px] flex h-[68px] w-[314px] items-center justify-center gap-[15px] rounded-[7px] bg-[#42a98b] text-[29px] text-white"
        >
          <BiMapPin className="size-[37px]" />
          Pin Location
        </button>
      </div>

      <MapPanel />

      <TextAreaField
        id="instructions"
        label="Detailed Pickup Instructions"
        value="12 Markwood Dr, Kitchener, ON N2M 2H4, Canada"
        className="mt-[36px]"
        height="h-[176px]"
      />
      <SelectField id="availability" label="Availability for Pickup" value="Weekends only" className="mt-[36px]" />

      <div className="mt-[81px]">
        <label htmlFor="images" className={labelClass}>
          Item Images
        </label>
        <div className="relative flex h-[92px] items-center gap-[9px] rounded-[6px] border-2 border-[#28a745] bg-white px-[15px] text-[#34495e]">
          <input id="images" type="file" multiple className="sr-only" />
          <label htmlFor="images" className="flex h-[57px] w-[196px] items-center justify-center rounded-[4px] border-2 border-[#767676] bg-[#efefef] text-[28px] text-black">
            Choose Files
          </label>
          <span className="text-[27px]">WhatsApp Image 2025-02-18 at 13.07.52.jpeg</span>
        </div>
      </div>

      <button type="submit" className="mt-[75px] block h-[57px] w-full rounded-[7px] bg-[#42a98b] text-[29px] text-white">
        Submit Donation
      </button>
    </form>
  );
}

/* ---------- footer ---------- */

const footerHeading = "mb-[46px] font-['Liberation_Sans',sans-serif] text-[37px] font-bold leading-[44px] text-[#66bda2]";

const socials: { label: string; Icon: IconType; color: string }[] = [
  { label: 'Facebook', Icon: BiLogoFacebook, color: 'text-[#1877f2]' },
  { label: 'Twitter', Icon: BiLogoTwitter, color: 'text-[#1da1f2]' },
  { label: 'Instagram', Icon: BiLogoInstagram, color: 'text-[#e4405f]' },
];

function Footer() {
  return (
    <footer className="mt-[58px] grow bg-[#364a41] pb-[89px] pt-[60px] text-[33px] leading-[48px] text-white">
      <div className="mx-auto max-w-[2132px]">
        <div className="grid grid-cols-3 gap-[45px] pb-[104px]">
          <section>
            <h2 className={footerHeading}>About ShareCare</h2>
            <p className="max-w-[580px]">Connecting communities through meaningful donations.</p>
          </section>
          <section>
            <h2 className={footerHeading}>Quick Links</h2>
            <ul className="flex flex-col gap-[15px] font-light text-[#dcdfe4]">
              {['About Us', 'How It Works', 'Contact'].map((t) => (
                <li key={t}>
                  <a href="#links">{t}</a>
                </li>
              ))}
            </ul>
          </section>
          <section>
            <h2 className={footerHeading}>Connect With Us</h2>
            <div className="flex gap-[30px]">
              {socials.map(({ label, Icon, color }) => (
                <a
                  key={label}
                  href="#social"
                  aria-label={label}
                  className={`flex size-[75px] items-center justify-center rounded-full bg-[#395549] ${color}`}
                >
                  <Icon className="size-[45px]" />
                </a>
              ))}
            </div>
          </section>
        </div>
        <p className="border-t-2 border-[#395549] pt-[45px] text-center text-[31px] font-light leading-[48px] text-[#ced4da]">
          © 2024 ShareCare. All rights reserved.
        </p>
      </div>
    </footer>
  );
}

export default function App() {
  return (
    <div className="flex min-h-screen flex-col bg-[#f8f9fb] font-[Inter,sans-serif] text-[#364a41]">
      <Header />
      <main>
        <nav aria-label="Breadcrumb" className="mx-auto max-w-[2132px] px-[28px] pb-[32px] pt-[30px]">
          <ol className="flex text-[28px] font-light leading-[40px]">
            <li>
              <a href="#home">HOME</a>
            </li>
            <li aria-hidden="true" className="pl-[15px] pr-[30px] text-[#d9dcdf]">
              /
            </li>
            <li aria-current="page" className="text-[#495057]">
              DONATE AN ITEM
            </li>
          </ol>
        </nav>
        <DonateForm />
      </main>
      <Footer />
    </div>
  );
}
